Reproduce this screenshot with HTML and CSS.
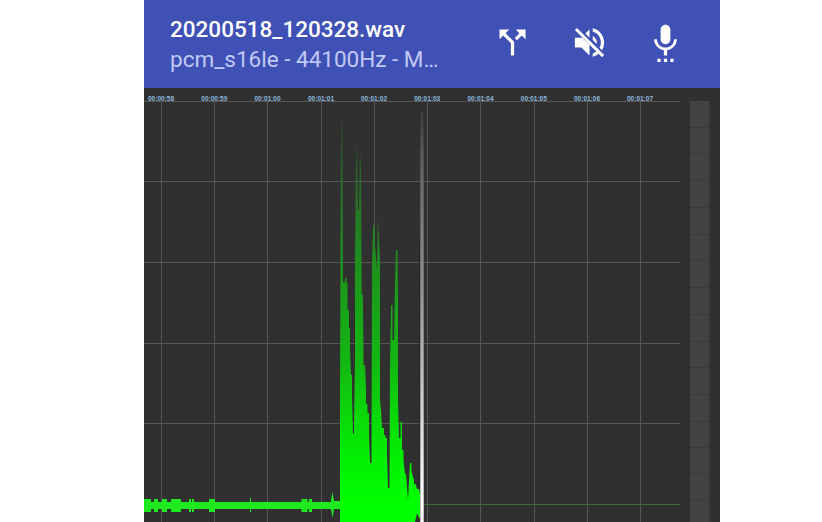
FILE: index.html
```html
<!DOCTYPE html>
<html lang="en">
<head>
<meta charset="utf-8">
<title>Recorder</title>
<link rel="stylesheet" href="styles.css">
</head>
<body>
<main class="app">
  <header class="bar">
    <div class="info">
      <h1 class="title">20200518_120328.wav</h1>
      <p class="subtitle">pcm_s16le - 44100Hz - M…</p>
    </div>
    <nav class="actions">
      <svg class="icon" viewBox="0 0 24 24"><path d="M14 4l2.29 2.29-2.88 2.88 1.42 1.42 2.88-2.88L20 10V4zm-4 0H4v6l2.29-2.29 4.71 4.7V20h2v-8.41l-5.29-5.3z"/></svg>
      <svg class="icon" viewBox="0 0 24 24"><path d="M3 9v6h4l5 5v-6.600L7.600 9z M12 4v5L9.500 6.500z M14 3.230v2.060c2.890.86 5 3.540 5 6.710 0 1.200-.3 2.300-.84 3.300l1.500 1.500A8.900 8.900 0 0 0 21 12c0-4.280-2.990-7.860-7-8.770z M14 7.970v2.500l2.450 2.450c.03-.3.050-.6.050-.92 0-1.770-1.020-3.290-2.500-4.030z M14 16.500v4.270c1.380-.31 2.630-.95 3.690-1.810l-1.430-1.430c-.67.5-1.430.9-2.260 1.180z"/><path d="M4.270 3L3 4.270 19.730 21 21 19.730z"/></svg>
      <svg class="icon" viewBox="0 0 24 24"><path d="M12 13c1.660 0 2.990-1.340 2.990-3L15 4c0-1.660-1.340-3-3-3S9 2.340 9 4v6c0 1.660 1.340 3 3 3zM7 24h2v-2H7zm4 0h2v-2h-2zm4 0h2v-2h-2zm4-14h-1.700c0 3-2.540 5.100-5.300 5.100S6.700 13 6.700 10H5c0 3.410 2.720 6.230 6 6.720V20h2v-3.280c3.280-.49 6-3.310 6-6.720z"/></svg>
    </nav>
  </header>
  <svg class="plot" viewBox="144 88 576 434">
    <defs>
      <linearGradient id="wave" gradientUnits="userSpaceOnUse" x1="0" y1="110" x2="0" y2="505">
        <stop offset="0" stop-color="#303030"/>
        <stop offset=".18" stop-color="#286c28"/>
        <stop offset=".4" stop-color="#1d921d"/>
        <stop offset=".65" stop-color="#12ba12"/>
        <stop offset=".85" stop-color="#04ea04"/>
        <stop offset="1" stop-color="#00ff00"/>
      </linearGradient>
      <linearGradient id="cursor" gradientUnits="userSpaceOnUse" x1="0" y1="105" x2="0" y2="500">
        <stop offset="0" stop-color="#3c3c3c"/>
        <stop offset=".2" stop-color="#6b6b6b"/>
        <stop offset=".5" stop-color="#979797"/>
        <stop offset=".8" stop-color="#d5d5d5"/>
        <stop offset="1" stop-color="#fff"/>
      </linearGradient>
    </defs>
    <path class="grid" d="M144 101.500H680M144 181.500H680M144 262.500H680M144 343.500H680M144 423.500H680M161.500 101V522M214.500 101V522M267.500 101V522M321.500 101V522M374.500 101V522M427.500 101V522M480.500 101V522M534.500 101V522M587.500 101V522M640.500 101V522"/>
    <path class="zero" d="M420 504.500H680"/>
    <g class="times">
      <text x="161" y="101.300">00:00:58</text><text x="214.300" y="101.300">00:00:59</text><text x="267.500" y="101.300">00:01:00</text><text x="321" y="101.300">00:01:01</text><text x="374" y="101.300">00:01:02</text><text x="427.200" y="101.300">00:01:03</text><text x="480.500" y="101.300">00:01:04</text><text x="533.800" y="101.300">00:01:05</text><text x="587" y="101.300">00:01:06</text><text x="640" y="101.300">00:01:07</text>
    </g>
    <rect class="meter" x="690" y="101" width="19.500" height="421"/>
    <path class="ticks" d="M690 127.500h20M690 153.500h20M690 180.500h20M690 207.500h20M690 234.500h20M690 260.500h20M690 287.500h20M690 314.500h20M690 341.500h20M690 367.500h20M690 394.500h20M690 421.500h20M690 447.500h20M690 473.500h20M690 500.500h20"/>
    <path fill="url(#wave)" d="M340 522V400L340.500 240L341 120H342.500L343 282H345V278H346.500V283H347.500V310H349V328H350V350L351 375H352V396L353 434H354V425L355 360V260L356 165L357 140L358 210H359L360 150L361 170L361.700 295H363V305L363.700 380V365H365L366 388V404H367.500V413H369V435L370 463H371.500L372 270L373 225H374.500L375 245L377 270L378 218L379 240L380 260V400L381 410L382 428H384V435H385.500V438H387V452L388 488H389.500L390 365L391 310V305H392.500V340H394L395 285L396 250H397.500L398 300V400L399 438H400.500V422H402V450H403.500V460L405 474H406L408 500L410 463H411.500V472L414 480V484H415.500L417 489H419L420 494V518H419L417 513L415 522z"/>
    <path class="quiet" d="M144 502H334V501H340V509H144zM144 499h7v13h-7zM154 499h4v13h-4zM162 499h5v13h-5zM171 499h10v13h-10zM189 499h2v13h-2zM192 499h2v13h-2zM209 499h6v13h-6zM250 498h1v14h-1zM301.500 499h6v13h-6zM309 499h3v13h-3zM331 509V500L332.500 492L334 500V509L332.500 518z"/>
    <path class="edge" d="M419.300 240h.9V488h-.9z"/>
    <path d="M420.300 522V150L421 112H423L423.700 150V522z" fill="url(#cursor)"/>
  </svg>
</main>
</body>
</html>
```
FILE: styles.css
```css
body { margin: 0; background: #fff; font-family: Roboto, "Liberation Sans", sans-serif; }
.app { width: 576px; height: 522px; margin-left: 144px; background: #303030; overflow: hidden; }
.bar { display: flex; box-sizing: border-box; height: 88px; padding: 14px 35px 0 26px; justify-content: space-between; background: #4051b5; }
.info { width: 280px; }
.title, .subtitle { margin: 0; font-size: 22.500px; line-height: 30px; white-space: nowrap; }
.title { font-weight: 500; color: #fff; }
.subtitle { font-weight: 400; color: #c0c9f5; }
.actions { display: flex; gap: 37.500px; padding-top: 9px; }
.icon { width: 39px; height: 39px; fill: #fff; overflow: visible; }
.plot { display: block; width: 576px; height: 434px; }
.grid { fill: none; stroke: #565656; stroke-width: 1; }
.zero { fill: none; stroke: #3c6a3c; stroke-width: 1; }
.times { fill: #8db8de; font-family: "Liberation Sans", Roboto, sans-serif; font-size: 6.500px; font-weight: 700; text-anchor: middle; }
.meter { fill: #434343; }
.ticks { fill: none; stroke: #393939; stroke-width: 1; }
.quiet { fill: #1fea1f; }
.edge { fill: #202020; }
```
